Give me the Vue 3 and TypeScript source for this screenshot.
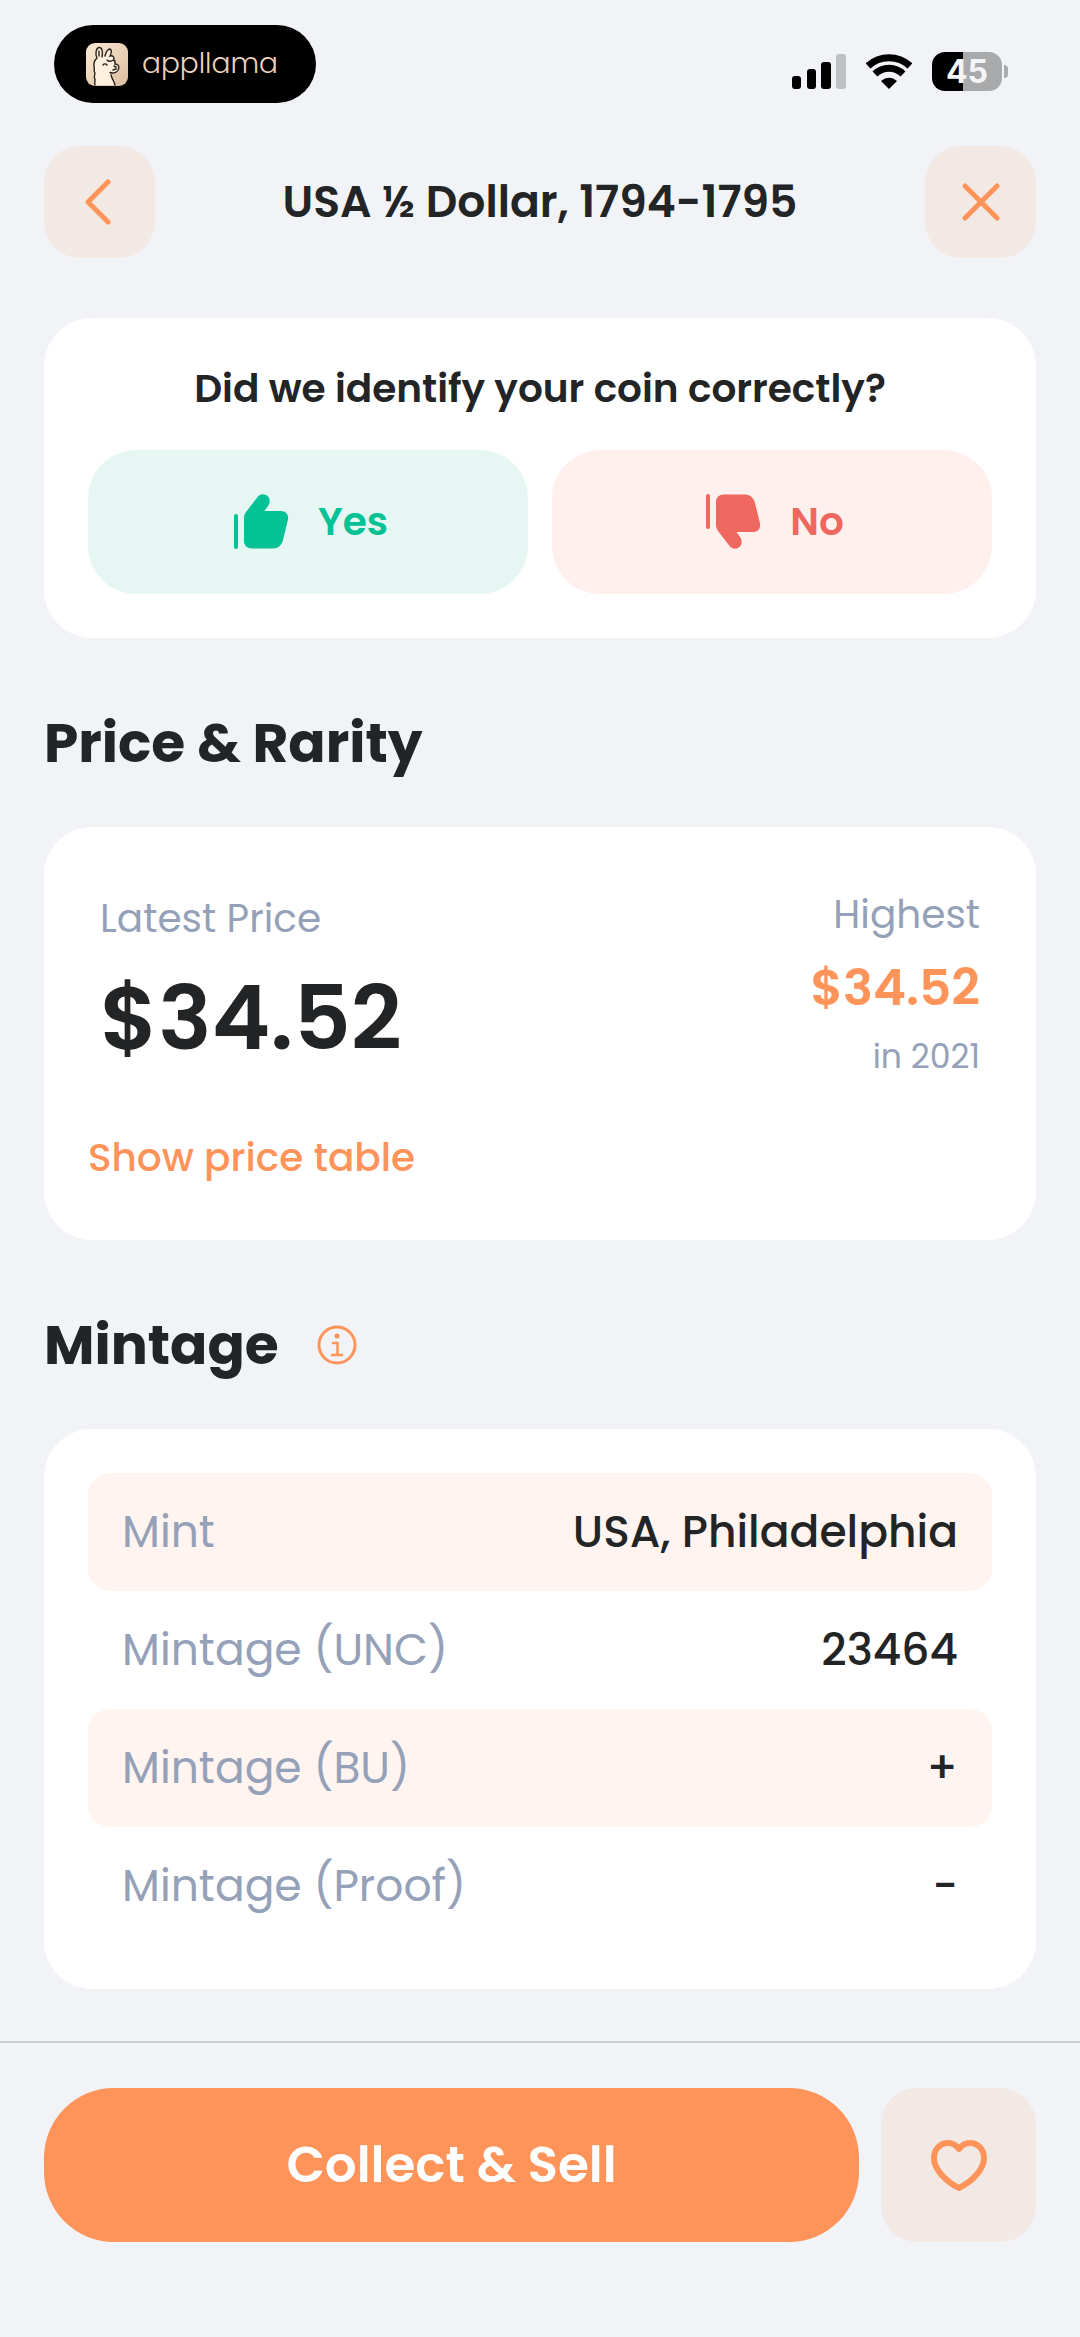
<script setup lang="ts">
import { ref } from 'vue'

interface MintageRow {
  label: string
  value: string
}

const title = 'USA ½ Dollar, 1794-1795'
const batteryLevel = 45
const answer = ref<'yes' | 'no' | null>(null)
const saved = ref(false)

const rows: MintageRow[] = [
  { label: 'Mint', value: 'USA, Philadelphia' },
  { label: 'Mintage (UNC)', value: '23464' },
  { label: 'Mintage (BU)', value: '+' },
  { label: 'Mintage (Proof)', value: '-' },
]
</script>

<template>
  <div class="screen">
    <div class="status-bar">
      <div class="brand">
        <svg class="brand-icon" viewBox="0 0 42 43" aria-hidden="true">
          <defs>
            <linearGradient id="sand" x1="0" y1="0" x2="1" y2="1">
              <stop offset="0" stop-color="#fbe9d3" />
              <stop offset="1" stop-color="#dcbd9f" />
            </linearGradient>
          </defs>
          <rect width="42" height="43" rx="9" fill="url(#sand)" />
          <path
            d="M9 42 C8 39 10 37 8.500 35 C7.500 33 10 31 8.500 29 C7.500 27 9 25 8 23 C7.500 20 9 17 11 15 C9 11 10 5 13 4.500 C16 4 17 9 16 14 L19 13 C20 9 22 6 24 6 C26 7 25.500 10 24 13 C27 12 29 15 27.500 17 C30 18 29 20 29 21 C32 21 33.500 23 32.500 26 C32 29 28 31 24 29.500 C25 34 27 38 29 42 Z"
            fill="#fff1de"
          />
          <path
            d="M9 42 C8 39 10 37 8.500 35 C7.500 33 10 31 8.500 29 C7.500 27 9 25 8 23 C7.500 20 9 17 11 15 C9 11 10 5 13 4.500 C16 4 17 9 16 14 M19 13 C20 9 22 6 24 6 C26 7 25.500 10 24 13 C27 12 29 15 27.500 17 C30 18 29 20 29 21 C32 21 33.500 23 32.500 26 C32 29 28 31 24 29.500 M25 32 C26 36 28 38 29 42 M13 8 V13 M17 22 C18 20.500 20 20.500 21 22 M28 23 L30 24 M30 24 V26 L27 27 M21 17 C23 19 26 18 27.500 17"
            fill="none"
            stroke="#2a201c"
            stroke-width="1.400"
            stroke-linecap="round"
          />
        </svg>
        <span class="brand-name">appllama</span>
      </div>
      <div class="indicators">
        <svg class="signal" viewBox="0 0 54 36" aria-hidden="true">
          <rect x="0" y="22" width="9" height="13" rx="3" />
          <rect x="15" y="15" width="9" height="20" rx="3" />
          <rect x="29" y="8" width="10" height="27" rx="3" />
          <rect x="44" y="0" width="10" height="35" rx="3" fill="#bfc0c3" />
        </svg>
        <svg class="wifi" viewBox="0 0 46 36" aria-hidden="true">
          <path d="M2 12 A31 31 0 0 1 44 12" fill="none" stroke="#000" stroke-width="7" />
          <path d="M9 20 A20 20 0 0 1 37 20" fill="none" stroke="#000" stroke-width="7" />
          <path d="M23 35 L15 27 C20 22.500 26 22.500 31 27 Z" />
        </svg>
        <div class="battery">
          <span class="battery-body">{{ batteryLevel }}</span>
          <span class="battery-tip"></span>
        </div>
      </div>
    </div>

    <header class="header">
      <button class="icon-button" type="button" aria-label="Back">
        <svg width="30" height="46" viewBox="0 0 30 46">
          <path d="M23 3 L3 23 L23 43" />
        </svg>
      </button>
      <h1>{{ title }}</h1>
      <button class="icon-button" type="button" aria-label="Close">
        <svg width="38" height="38" viewBox="0 0 38 38">
          <path d="M3 3 L35 35 M35 3 L3 35" />
        </svg>
      </button>
    </header>

    <main>
      <section class="card">
        <p class="question">Did we identify your coin correctly?</p>
        <div class="answers">
          <button class="answer yes" type="button" :aria-pressed="answer === 'yes'" @click="answer = 'yes'">
            <svg viewBox="0 0 55 55" aria-hidden="true">
              <rect x="0" y="20" width="4" height="35" rx="2" />
              <path
                d="M10 24 Q10 20.500 12 18 L24 2.500 C27 -1 33 0 35 4 C36.300 7 35.500 10 34 12 L30.500 17 H47 C51.500 17 55 20.500 54 25.500 L49 46 C47.500 51.500 44 54.500 39 54.500 H18 C13 54.500 10 51.500 10 47 Z"
              />
            </svg>
            Yes
          </button>
          <button class="answer no" type="button" :aria-pressed="answer === 'no'" @click="answer = 'no'">
            <svg viewBox="0 0 55 55" aria-hidden="true">
              <g transform="matrix(1 0 0 -1 0 55)">
                <rect x="0" y="20" width="4" height="35" rx="2" />
                <path
                  d="M10 24 Q10 20.500 12 18 L24 2.500 C27 -1 33 0 35 4 C36.300 7 35.500 10 34 12 L30.500 17 H47 C51.500 17 55 20.500 54 25.500 L49 46 C47.500 51.500 44 54.500 39 54.500 H18 C13 54.500 10 51.500 10 47 Z"
                />
              </g>
            </svg>
            No
          </button>
        </div>
      </section>

      <h2>Price &amp; Rarity</h2>
      <section class="card price-card">
        <div class="prices">
          <div class="latest">
            <span class="caption">Latest Price</span>
            <strong class="price">$34.52</strong>
          </div>
          <div class="highest">
            <span class="caption">Highest</span>
            <strong class="peak">$34.52</strong>
            <span class="year">in 2021</span>
          </div>
        </div>
        <a class="table-link" href="#prices">Show price table</a>
      </section>

      <h2>
        Mintage
        <button class="info" type="button" aria-label="About mintage">
          <svg viewBox="0 0 40 40">
            <circle cx="20" cy="20" r="18" fill="none" stroke="currentColor" stroke-width="3" />
            <circle cx="20" cy="11" r="2.500" fill="currentColor" />
            <path d="M16 18 H20.500 V30 M15 30 H25" fill="none" stroke="currentColor" stroke-width="2.500" stroke-linecap="round" />
          </svg>
        </button>
      </h2>
      <section class="card">
        <table>
          <tbody>
            <tr v-for="row in rows" :key="row.label">
              <th scope="row">{{ row.label }}</th>
              <td>{{ row.value }}</td>
            </tr>
          </tbody>
        </table>
      </section>
    </main>

    <footer>
      <button class="collect" type="button">Collect &amp; Sell</button>
      <button class="favourite" type="button" aria-label="Save" :aria-pressed="saved" @click="saved = !saved">
        <svg width="56" height="51" viewBox="0 0 56 51">
          <path
            d="M28 9 C25 5 21.500 3 17 3 C9 3 3 9.500 3 18 C3 29 14 41 28 48 C42 41 53 29 53 18 C53 9.500 47 3 39 3 C34.500 3 31 5 28 9 Z"
          />
        </svg>
      </button>
    </footer>
  </div>
</template>

<style>
body {
  margin: 0;
  background: #f1f3f7;
}
</style>

<style scoped>
.screen {
  display: flex;
  flex-direction: column;
  box-sizing: border-box;
  min-height: 100vh;
  background: #f1f3f7;
  color: #222426;
  font-family: Poppins, Inter, "Liberation Sans", sans-serif;
}

button {
  display: flex;
  align-items: center;
  justify-content: center;
  padding: 0;
  border: 0;
  font-family: inherit;
  cursor: pointer;
}

h1,
h2,
p {
  margin: 0;
}

.status-bar {
  display: flex;
  align-items: center;
  justify-content: space-between;
  padding: 25px 72px 43px 54px;
}

.brand {
  display: flex;
  align-items: center;
  gap: 14px;
  box-sizing: border-box;
  height: 78px;
  padding: 0 38px 0 32px;
  border-radius: 39px;
  background: #000;
}

.brand-icon {
  width: 42px;
  height: 43px;
}

.brand-name {
  color: #ecd2bf;
  font-size: 28px;
  font-weight: 300;
  line-height: 40px;
}

.indicators {
  display: flex;
  align-items: center;
  gap: 20px;
  padding-top: 15px;
}

.signal {
  width: 54px;
  height: 36px;
}

.wifi {
  width: 46px;
  height: 36px;
}

.battery {
  display: flex;
  align-items: center;
  gap: 2px;
}

.battery-body {
  width: 70px;
  border-radius: 13px;
  background: linear-gradient(90deg, #000 45%, #a9aaac 45%);
  color: #f4f5f7;
  font-family: Inter, "Liberation Sans", sans-serif;
  font-size: 32px;
  font-weight: 700;
  line-height: 39px;
  text-align: center;
}

.battery-tip {
  width: 4px;
  height: 13px;
  border-radius: 0 6px 6px 0;
  background: #a9aaac;
}

.header {
  display: flex;
  align-items: center;
  justify-content: space-between;
  padding: 0 44px;
}

.icon-button {
  width: 111px;
  height: 112px;
  border-radius: 36px;
  background: #f2e9e5;
}

.icon-button svg,
.favourite svg {
  fill: none;
  stroke: #ff945a;
  stroke-width: 5;
  stroke-linecap: round;
  stroke-linejoin: round;
}

h1 {
  font-size: 44px;
  font-weight: 600;
  line-height: 60px;
}

main {
  padding: 60px 44px 51px;
}

.card {
  padding: 44px;
  border-radius: 48px;
  background: #fff;
}

.question {
  font-size: 39px;
  font-weight: 600;
  line-height: 54px;
  text-align: center;
}

.answers {
  display: flex;
  gap: 24px;
  margin-top: 34px;
}

.answer {
  flex: 1;
  gap: 29px;
  height: 144px;
  padding: 0 0 2px 6px;
  border-radius: 48px;
  font-size: 39px;
  font-weight: 600;
}

.answer svg {
  width: 55px;
  height: 55px;
  fill: currentColor;
}

.yes {
  background: #e6f7f3;
  color: #05c196;
}

.no {
  background: #fdf0ed;
  color: #ee685f;
}

h2 {
  display: flex;
  align-items: center;
  gap: 38px;
  margin: 75px 0 54px;
  font-size: 55px;
  font-weight: 700;
  line-height: 60px;
}

.info {
  width: 40px;
  height: 40px;
  background: none;
  color: #ff945a;
}

.price-card {
  padding: 64px 44px 58px;
}

.prices {
  display: flex;
  align-items: center;
  justify-content: space-between;
  padding: 0 12px;
}

.latest,
.highest {
  display: flex;
  flex-direction: column;
  gap: 19px;
}

.highest {
  align-items: flex-end;
}

.caption {
  color: #95a1b8;
  font-size: 39px;
  line-height: 48px;
}

.price {
  font-size: 89px;
  font-weight: 600;
  line-height: 112px;
}

.peak {
  color: #ff945a;
  font-size: 50px;
  font-weight: 600;
  line-height: 60px;
}

.year {
  color: #95a1b8;
  font-size: 33px;
  line-height: 40px;
}

.table-link {
  display: inline-block;
  margin-top: 57px;
  color: #ff945a;
  font-size: 39px;
  font-weight: 500;
  line-height: 48px;
  text-decoration: none;
}

table {
  width: 100%;
  border-spacing: 0;
  font-size: 44px;
  line-height: 60px;
}

th,
td {
  padding: 29px 34px;
}

th {
  border-radius: 22px 0 0 22px;
  color: #95a1b8;
  font-weight: 400;
  text-align: left;
}

td {
  border-radius: 0 22px 22px 0;
  font-weight: 500;
  text-align: right;
}

tr:nth-child(odd) > * {
  background: #fff4ef;
}

footer {
  display: flex;
  gap: 22px;
  margin-top: auto;
  padding: 45px 44px 95px;
  border-top: 2px solid #c8d0d7;
}

.collect {
  flex: 1;
  height: 154px;
  border-radius: 70px;
  background: #ff945a;
  color: #fff;
  font-size: 50px;
  font-weight: 600;
}

.favourite {
  width: 155px;
  height: 154px;
  border-radius: 36px;
  background: #f2e9e5;
}

.favourite svg {
  stroke-width: 6;
}
</style>
